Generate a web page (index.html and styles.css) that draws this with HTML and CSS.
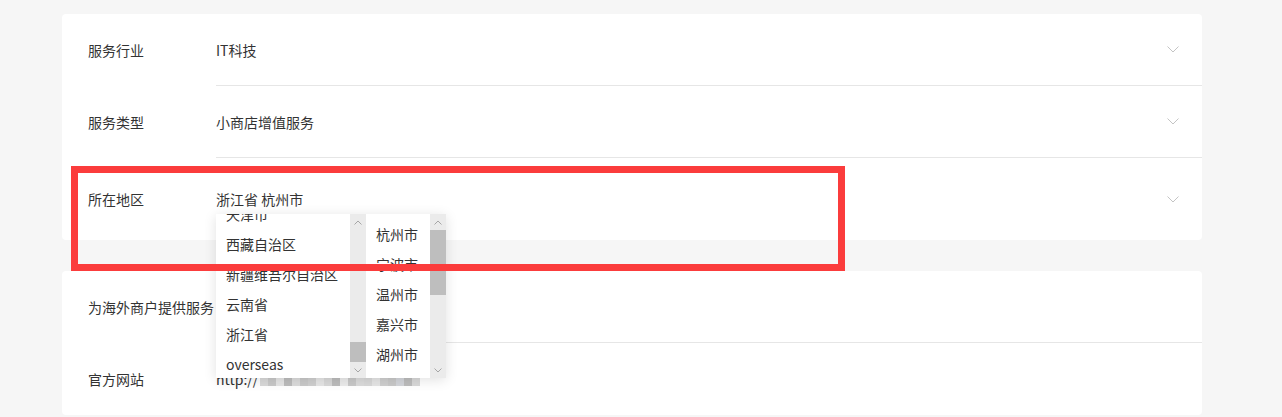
FILE: index.html
```html
<!DOCTYPE html>
<html lang="zh-CN">
<head>
<meta charset="utf-8">
<title>商户信息</title>
<link rel="stylesheet" href="styles.css">
</head>
<body>
<div class="page">
  <section class="card card-top">
    <div class="row">
      <div class="label">服务行业</div>
      <div class="field">
        <span class="value">IT科技</span>
        <svg class="chev" width="12" height="7" viewBox="0 0 12 7"><polyline points="0.5,0.5 6,6 11.5,0.5" fill="none" stroke="#c4c4c4" stroke-width="1"/></svg>
      </div>
    </div>
    <div class="row">
      <div class="label">服务类型</div>
      <div class="field">
        <span class="value">小商店增值服务</span>
        <svg class="chev" width="12" height="7" viewBox="0 0 12 7"><polyline points="0.5,0.5 6,6 11.5,0.5" fill="none" stroke="#c4c4c4" stroke-width="1"/></svg>
      </div>
    </div>
    <div class="row row-last">
      <div class="label">所在地区</div>
      <div class="field">
        <span class="value">浙江省 杭州市</span>
        <svg class="chev" width="12" height="7" viewBox="0 0 12 7"><polyline points="0.5,0.5 6,6 11.5,0.5" fill="none" stroke="#c4c4c4" stroke-width="1"/></svg>
      </div>
    </div>
  </section>

  <section class="card card-bottom">
    <div class="row">
      <div class="label">为海外商户提供服务</div>
      <div class="field"></div>
    </div>
    <div class="row row-last2">
      <div class="label">官方网站</div>
      <div class="field">
        <span class="value url">http://<span class="mosaic"><i class="m1"></i><i class="m2"></i><i class="m3"></i><i class="m4"></i><i class="m5"></i><i class="m2"></i><i class="m6"></i><i class="m3"></i><i class="m1"></i><i class="m4"></i><i class="m7"></i><i class="m2"></i><i class="m5"></i><i class="m1"></i><i class="m3"></i><i class="m6"></i><i class="m2"></i><i class="m8"></i><i class="m4"></i><i class="m1"></i></span></span>
      </div>
    </div>
  </section>

  <div class="cascader">
    <div class="panel panel-prov">
      <div class="list">
        <ul class="items items-prov">
          <li>天津市</li>
          <li>西藏自治区</li>
          <li>新疆维吾尔自治区</li>
          <li>云南省</li>
          <li>浙江省</li>
          <li>overseas</li>
        </ul>
      </div>
      <div class="sbar">
        <div class="arrow"><svg width="8" height="5" viewBox="0 0 8 5"><polyline points="0.5,4.5 4,1 7.5,4.5" fill="none" stroke="#a6a6a6" stroke-width="1"/></svg></div>
        <div class="track"><div class="thumb thumb-prov"></div></div>
        <div class="arrow"><svg width="8" height="5" viewBox="0 0 8 5"><polyline points="0.5,0.5 4,4 7.5,0.5" fill="none" stroke="#a6a6a6" stroke-width="1"/></svg></div>
      </div>
    </div>
    <div class="panel panel-city">
      <div class="list">
        <ul class="items items-city">
          <li>杭州市</li>
          <li>宁波市</li>
          <li>温州市</li>
          <li>嘉兴市</li>
          <li>湖州市</li>
        </ul>
      </div>
      <div class="sbar">
        <div class="arrow"><svg width="8" height="5" viewBox="0 0 8 5"><polyline points="0.5,4.5 4,1 7.5,4.5" fill="none" stroke="#a6a6a6" stroke-width="1"/></svg></div>
        <div class="track"><div class="thumb thumb-city"></div></div>
        <div class="arrow"><svg width="8" height="5" viewBox="0 0 8 5"><polyline points="0.5,0.5 4,4 7.5,0.5" fill="none" stroke="#a6a6a6" stroke-width="1"/></svg></div>
      </div>
    </div>
  </div>

  <div class="highlight"></div>
</div>
</body>
</html>
```

FILE: styles.css
```css
* { box-sizing: border-box; }
html, body {
  margin: 0;
  padding: 0;
  background: #f6f6f6;
}
body {
  font-family: "Noto Sans CJK SC", "Noto Sans", sans-serif;
  font-size: 14px;
  color: #333;
  width: 1282px;
  height: 417px;
  overflow: hidden;
}
.page {
  position: relative;
  padding: 14px 80px 0 62px;
}
.card {
  background: #fff;
  border-radius: 4px;
  padding-left: 26px;
}
.card-bottom {
  margin-top: 31px;
}
.row {
  display: flex;
  height: 72px;
}
.row-last { height: 82px; }
.row-last2 { height: 72px; }
.label {
  width: 128px;
  flex: none;
  display: flex;
  align-items: center;
  white-space: nowrap;
  line-height: 20px;
}
.field {
  flex: 1;
  display: flex;
  align-items: center;
  justify-content: space-between;
  padding-right: 23px;
  border-bottom: 1px solid #e6e6e6;
  line-height: 20px;
}
.row-last .field, .row-last2 .field { border-bottom: none; }
.chev { display: block; flex: none; }
.url {
  display: flex;
  align-items: center;
}
.mosaic {
  display: flex;
  margin-left: 2px;
  height: 14px;
}
.mosaic i {
  display: block;
  width: 8px;
  height: 14px;
}
.m1 { background: #d9d9d9; }
.m2 { background: #c9c9c9; }
.m3 { background: #e6e6e6; }
.m4 { background: #bdbdbd; }
.m5 { background: #dcdcdc; }
.m6 { background: #cfcfcf; }
.m7 { background: #ececec; }
.m8 { background: #d3d5da; }

.cascader {
  position: absolute;
  left: 216px;
  top: 214px;
  height: 164px;
  display: flex;
  background: #fff;
  box-shadow: 0 2px 12px rgba(0, 0, 0, 0.12);
}
.panel {
  display: flex;
  height: 164px;
}
.panel-prov { width: 150px; }
.panel-city { width: 80px; }
.list {
  flex: 1;
  overflow: hidden;
}
.items {
  list-style: none;
  margin: 0;
  padding: 0;
}
.items li {
  height: 30px;
  line-height: 30px;
  padding-left: 10px;
  white-space: nowrap;
  color: #333;
}
.items-prov { margin-top: -15px; }
.items-city { margin-top: 5px; }
.sbar {
  width: 16px;
  flex: none;
  display: flex;
  flex-direction: column;
  background: #ebebeb;
}
.arrow {
  height: 16px;
  display: flex;
  align-items: center;
  justify-content: center;
}
.arrow svg { display: block; }
.track {
  flex: 1;
}
.thumb {
  background: #bebebe;
}
.thumb-prov { margin-top: 112px; height: 20px; }
.thumb-city { margin-top: 0; height: 65px; }

.highlight {
  position: absolute;
  left: 71px;
  top: 166px;
  width: 774px;
  height: 105px;
  border: 7px solid #fb3c3c;
  pointer-events: none;
}
```
